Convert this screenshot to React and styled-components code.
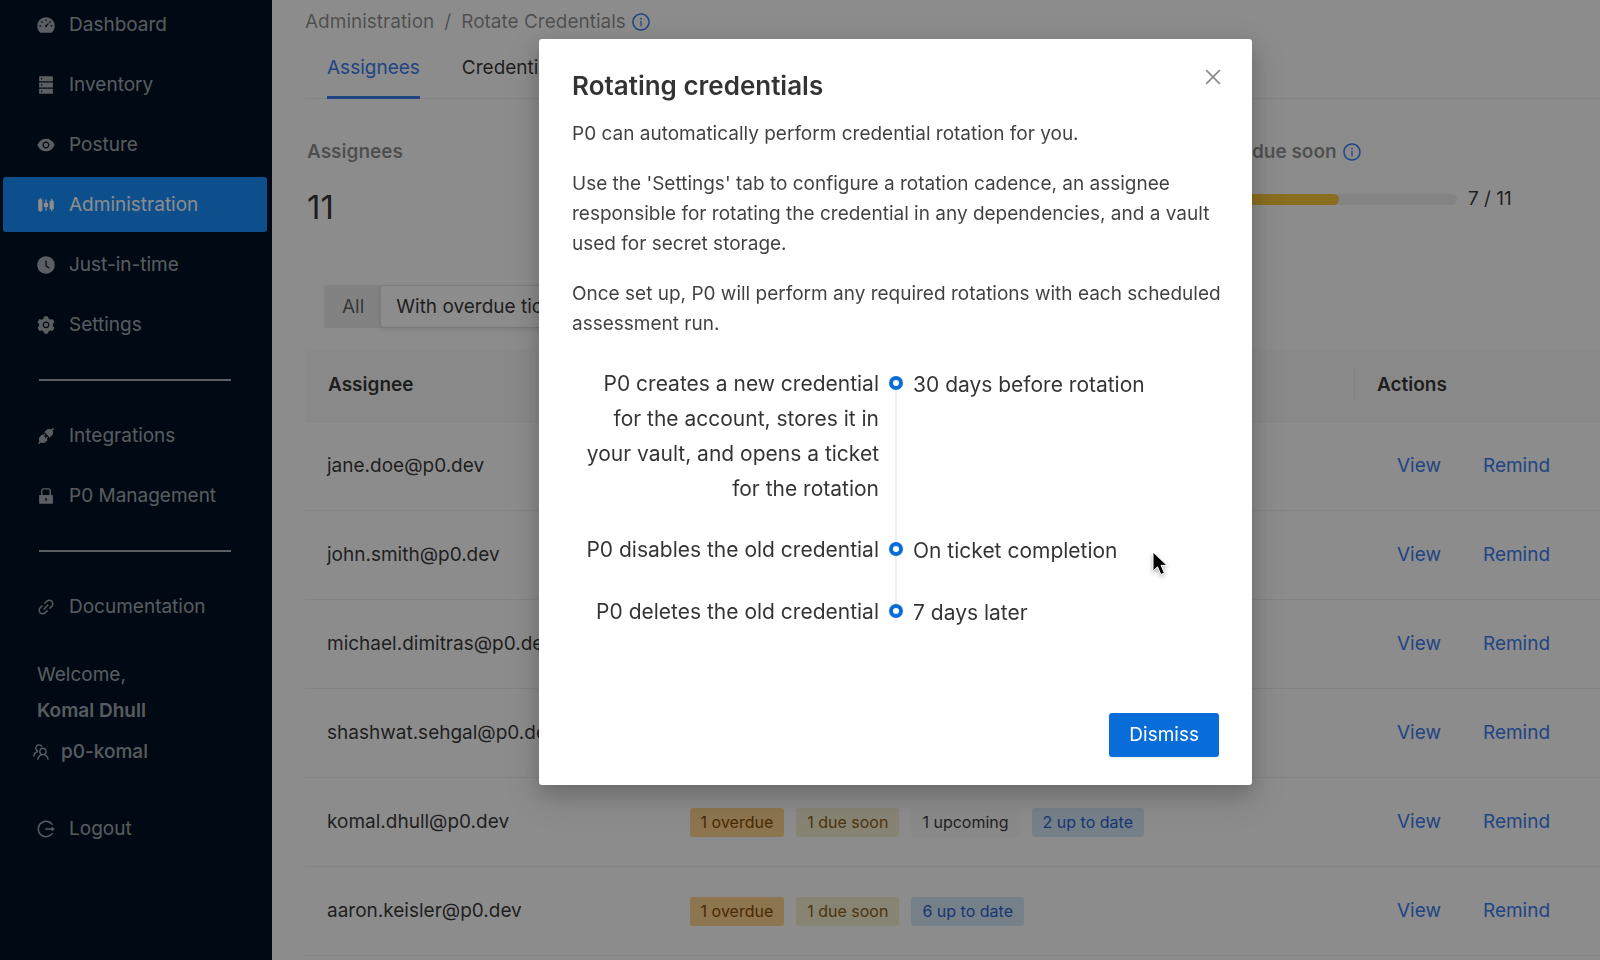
import React, { useState } from 'react';
import styled, { createGlobalStyle } from 'styled-components';
import {
  AiFillApi,
  AiFillClockCircle,
  AiFillDashboard,
  AiFillDatabase,
  AiFillEye,
  AiFillLock,
  AiFillSetting,
  AiFillSliders,
  AiOutlineClose,
  AiOutlineInfoCircle,
  AiOutlineLink,
  AiOutlineLogout,
  AiOutlineTeam,
} from 'react-icons/ai';

const GlobalStyle = createGlobalStyle`
  *,
  *::before,
  *::after {
    box-sizing: border-box;
  }

  body {
    margin: 0;
    overflow: hidden;
    background: #fff;
    color: rgba(0, 0, 0, 0.8);
    font-family: Inter, "Liberation Sans", sans-serif;
    font-size: 19px;
    line-height: 30px;
  }

  button {
    font: inherit;
    cursor: pointer;
  }

  a {
    text-decoration: none;
  }
`;

const Layout = styled.div`
  display: flex;
  height: 100vh;
  overflow: hidden;
`;

const Sidebar = styled.aside`
  flex: 0 0 272px;
  background: #001225;
  color: rgba(255, 255, 255, 0.65);
`;

const Menu = styled.nav`
  display: flex;
  flex-direction: column;
  gap: 5px;
  margin-top: -3px;
  padding: 0 5px 0 3px;
`;

const MenuItem = styled.a`
  display: flex;
  align-items: center;
  gap: 13px;
  height: 55px;
  padding-left: 33px;
  border-radius: 3px;
  background: ${({ $active }) => ($active ? '#1890ff' : 'transparent')};
  color: ${({ $active }) => ($active ? '#fff' : 'rgba(255, 255, 255, 0.65)')};
`;

const MenuDivider = styled.hr`
  width: 192px;
  height: 2px;
  margin: 22px 36px;
  border: 0;
  background: rgba(255, 255, 255, 0.65);
`;

const UserBlock = styled.div`
  display: flex;
  flex-direction: column;
  gap: 6px;
  padding: 21px 0 29px 34px;
`;

const UserName = styled.strong`
  font-weight: 600;
`;

const Tenant = styled.div`
  display: flex;
  align-items: center;
  gap: 10px;
  margin: 5px 0 0 -6px;
  font-weight: 500;
`;

const Main = styled.main`
  flex: 1;
  min-width: 0;
  padding: 7px 0 0 33px;
`;

const Breadcrumb = styled.div`
  display: flex;
  align-items: center;
  gap: 10px;
  color: rgba(0, 0, 0, 0.45);
`;

const CurrentPage = styled.span`
  display: flex;
  align-items: center;
  gap: 5px;
`;

const InfoIcon = styled(AiOutlineInfoCircle)`
  width: 20px;
  height: 20px;
  color: #3b7df0;
`;

const Tabs = styled.div`
  display: flex;
  gap: 42px;
  padding-left: 22px;
  border-bottom: 1px solid #f0f0f0;
`;

const Tab = styled.button`
  margin-bottom: -1px;
  padding: 16px 0 13px;
  border: 0;
  border-bottom: 3px solid ${({ $active }) => ($active ? '#3b7df0' : 'transparent')};
  background: none;
  color: ${({ $active }) => ($active ? '#3b7df0' : 'rgba(0, 0, 0, 0.8)')};
`;

const Stats = styled.section`
  display: grid;
  grid-template-columns: 2fr 1fr;
  padding: 38px 56px 0 2px;
`;

const StatLabel = styled.div`
  display: flex;
  align-items: center;
  gap: 5px;
  margin-bottom: 17px;
  color: rgba(0, 0, 0, 0.45);
  font-weight: 600;
`;

const StatNumber = styled.div`
  font-size: 33px;
  line-height: 46px;
`;

const ProgressRow = styled.div`
  display: flex;
  align-items: center;
  gap: 11px;
  max-width: 380px;
`;

const ProgressTrack = styled.div`
  flex: 1;
  height: 11px;
  overflow: hidden;
  border-radius: 6px;
  background: #f0f0f0;
`;

const ProgressFill = styled.div`
  height: 100%;
  border-radius: 6px;
  background: #fcc93a;
`;

const Segmented = styled.div`
  display: inline-flex;
  margin: 55px 0 21px 19px;
  padding: 1px;
  border-radius: 3px;
  background: #ededed;
`;

const Segment = styled.button`
  height: 41px;
  padding: 0 ${({ $active }) => ($active ? '15px' : '17px')};
  border: 0;
  border-radius: 3px;
  background: ${({ $active }) => ($active ? '#fff' : 'transparent')};
  box-shadow: ${({ $active }) => ($active ? '0 2px 6px rgba(0, 0, 0, 0.12)' : 'none')};
  color: ${({ $active }) => ($active ? 'rgba(0, 0, 0, 0.8)' : 'rgba(0, 0, 0, 0.6)')};
`;

const Table = styled.table`
  width: 100%;
  table-layout: fixed;
  border-collapse: separate;
  border-spacing: 0;
`;

const HeadCell = styled.th`
  width: ${({ $width }) => $width};
  height: 73px;
  padding: 0;
  border-bottom: 1px solid #f0f0f0;
  background: #fafafa;
  font-weight: 600;
  text-align: left;
`;

const HeadLabel = styled.div`
  padding-left: 22px;
  border-left: 1px solid ${({ $divided }) => ($divided ? '#ececec' : 'transparent')};
`;

const Cell = styled.td`
  height: 89px;
  padding: 0 0 0 22px;
  border-bottom: 1px solid #f0f0f0;
`;

const TagList = styled.div`
  display: flex;
  gap: 12px;
`;

const tagColors = {
  overdue: ['#ffd591', '#874d00'],
  soon: ['#f8f0d4', '#8a6116'],
  upcoming: ['#fafafa', 'rgba(0, 0, 0, 0.8)'],
  current: ['#d6e9f8', '#2f62d6'],
};

const Tag = styled.span`
  padding: 0 11px;
  border-radius: 3px;
  background: ${({ $kind }) => tagColors[$kind][0]};
  color: ${({ $kind }) => tagColors[$kind][1]};
  font-size: 16px;
  line-height: 29px;
`;

const LinkButton = styled.button`
  padding: 0 21px;
  border: 0;
  background: none;
  color: #3b7df0;
`;

const Overlay = styled.div`
  position: fixed;
  inset: 0;
  display: flex;
  justify-content: center;
  align-items: flex-start;
  padding: 39px 0 0 191px;
  background: rgba(0, 0, 0, 0.45);
`;

const Modal = styled.section`
  width: 713px;
  padding: 27px 33px 28px;
  border-radius: 3px;
  background: #fff;
  box-shadow: 0 8px 22px rgba(0, 0, 0, 0.2), 0 12px 38px 10px rgba(0, 0, 0, 0.08);
`;

const ModalHeader = styled.header`
  display: flex;
  justify-content: space-between;
  align-items: flex-start;
  margin-bottom: 18px;
`;

const ModalTitle = styled.h2`
  margin: 0;
  padding-top: 4px;
  font-size: 26px;
  font-weight: 600;
  line-height: 31px;
`;

const CloseButton = styled.button`
  display: flex;
  padding: 0;
  margin-right: -5px;
  border: 0;
  background: none;
  color: rgba(0, 0, 0, 0.45);
`;

const Paragraph = styled.p`
  margin: 0 -12px 20px 0;
  color: rgba(0, 0, 0, 0.75);
`;

const Timeline = styled.ol`
  display: grid;
  gap: 26px;
  margin: 27px 0 83px;
  padding: 0;
  list-style: none;
  font-size: 21px;
  line-height: 35px;
`;

const Step = styled.li`
  display: grid;
  grid-template-columns: 307px 14px 1fr;
  column-gap: 10px;
`;

const StepText = styled.div`
  text-align: right;
`;

const StepMarker = styled.div`
  position: relative;
  display: flex;
  justify-content: center;
  align-items: flex-start;

  &::before {
    content: '';
    width: 14px;
    height: 14px;
    margin-top: 10px;
    border: 4px solid #096dd9;
    border-radius: 50%;
  }

  &::after {
    content: '';
    position: absolute;
    top: 24px;
    bottom: -36px;
    width: 2px;
    background: #f0f0f0;
  }

  ${Step}:last-child &::after {
    display: none;
  }
`;

const StepTime = styled.div`
  padding-top: 1px;
`;

const ModalFooter = styled.footer`
  display: flex;
  justify-content: flex-end;
`;

const PrimaryButton = styled.button`
  height: 44px;
  padding: 0 20px;
  border: 0;
  border-radius: 3px;
  background: #096dd9;
  box-shadow: 0 2px 2px rgba(0, 0, 0, 0.05);
  color: #fff;
`;

const Cursor = styled.svg`
  position: fixed;
  top: 550px;
  left: 1150px;
  filter: drop-shadow(0 2px 2px rgba(0, 0, 0, 0.3));
  pointer-events: none;
`;

const mainMenu = [
  { label: 'Dashboard', icon: AiFillDashboard },
  { label: 'Inventory', icon: AiFillDatabase },
  { label: 'Posture', icon: AiFillEye },
  { label: 'Administration', icon: AiFillSliders, active: true },
  { label: 'Just-in-time', icon: AiFillClockCircle },
  { label: 'Settings', icon: AiFillSetting },
];

const manageMenu = [
  { label: 'Integrations', icon: AiFillApi },
  { label: 'P0 Management', icon: AiFillLock },
];

const assignees = [
  { email: 'jane.doe@p0.dev', tags: [] },
  { email: 'john.smith@p0.dev', tags: [] },
  { email: 'michael.dimitras@p0.dev', tags: [] },
  { email: 'shashwat.sehgal@p0.dev', tags: [] },
  {
    email: 'komal.dhull@p0.dev',
    tags: [
      ['overdue', '1 overdue'],
      ['soon', '1 due soon'],
      ['upcoming', '1 upcoming'],
      ['current', '2 up to date'],
    ],
  },
  {
    email: 'aaron.keisler@p0.dev',
    tags: [
      ['overdue', '1 overdue'],
      ['soon', '1 due soon'],
      ['current', '6 up to date'],
    ],
  },
];

const steps = [
  {
    text: 'P0 creates a new credential for the account, stores it in your vault, and opens a ticket for the rotation',
    time: '30 days before rotation',
  },
  { text: 'P0 disables the old credential', time: 'On ticket completion' },
  { text: 'P0 deletes the old credential', time: '7 days later' },
];

const NavLink = ({ label, icon: Icon, active }) => (
  <MenuItem href="#" $active={active}>
    <Icon size={20} />
    {label}
  </MenuItem>
);

const Progress = ({ count, total }) => (
  <ProgressRow>
    <ProgressTrack>
      <ProgressFill style={{ width: `${(count / total) * 100}%` }} />
    </ProgressTrack>
    <span>{count} / {total}</span>
  </ProgressRow>
);

const RotationModal = ({ onClose }) => (
  <Overlay>
    <Modal role="dialog" aria-labelledby="rotation-title">
      <ModalHeader>
        <ModalTitle id="rotation-title">Rotating credentials</ModalTitle>
        <CloseButton aria-label="Close" onClick={onClose}>
          <AiOutlineClose size={22} />
        </CloseButton>
      </ModalHeader>
      <Paragraph>P0 can automatically perform credential rotation for you.</Paragraph>
      <Paragraph>
        Use the 'Settings' tab to configure a rotation cadence, an assignee
        responsible for rotating the credential in any dependencies, and a vault
        used for secret storage.
      </Paragraph>
      <Paragraph>
        Once set up, P0 will perform any required rotations with each scheduled
        assessment run.
      </Paragraph>
      <Timeline>
        {steps.map((step) => (
          <Step key={step.time}>
            <StepText>{step.text}</StepText>
            <StepMarker />
            <StepTime>{step.time}</StepTime>
          </Step>
        ))}
      </Timeline>
      <ModalFooter>
        <PrimaryButton onClick={onClose}>Dismiss</PrimaryButton>
      </ModalFooter>
    </Modal>
  </Overlay>
);

const App = () => {
  const [modalOpen, setModalOpen] = useState(true);

  return (
    <>
      <GlobalStyle />
      <Layout>
        <Sidebar>
          <Menu>
            {mainMenu.map((item) => (
              <NavLink key={item.label} {...item} />
            ))}
            <MenuDivider />
            {manageMenu.map((item) => (
              <NavLink key={item.label} {...item} />
            ))}
            <MenuDivider />
            <NavLink label="Documentation" icon={AiOutlineLink} />
            <UserBlock>
              <span>Welcome,</span>
              <UserName>Komal Dhull</UserName>
              <Tenant>
                <AiOutlineTeam size={20} />
                p0-komal
              </Tenant>
            </UserBlock>
            <NavLink label="Logout" icon={AiOutlineLogout} />
          </Menu>
        </Sidebar>
        <Main>
          <Breadcrumb>
            <span>Administration</span>
            <span>/</span>
            <CurrentPage>
              Rotate Credentials
              <InfoIcon />
            </CurrentPage>
          </Breadcrumb>
          <Tabs role="tablist">
            <Tab role="tab" aria-selected="true" $active>Assignees</Tab>
            <Tab role="tab" aria-selected="false">Credentials</Tab>
          </Tabs>
          <Stats>
            <div>
              <StatLabel>Assignees</StatLabel>
              <StatNumber>11</StatNumber>
            </div>
            <div>
              <StatLabel>
                Open tickets due soon
                <InfoIcon />
              </StatLabel>
              <Progress count={7} total={11} />
            </div>
          </Stats>
          <Segmented>
            <Segment>All</Segment>
            <Segment $active>With overdue tickets</Segment>
          </Segmented>
          <Table>
            <thead>
              <tr>
                <HeadCell $width="28%"><HeadLabel>Assignee</HeadLabel></HeadCell>
                <HeadCell $width="53%" />
                <HeadCell $width="19%"><HeadLabel $divided>Actions</HeadLabel></HeadCell>
              </tr>
            </thead>
            <tbody>
              {assignees.map(({ email, tags }) => (
                <tr key={email}>
                  <Cell>{email}</Cell>
                  <Cell>
                    <TagList>
                      {tags.map(([kind, label]) => (
                        <Tag key={label} $kind={kind}>{label}</Tag>
                      ))}
                    </TagList>
                  </Cell>
                  <Cell>
                    <LinkButton>View</LinkButton>
                    <LinkButton>Remind</LinkButton>
                  </Cell>
                </tr>
              ))}
            </tbody>
          </Table>
        </Main>
      </Layout>
      {modalOpen && <RotationModal onClose={() => setModalOpen(false)} />}
      <Cursor width="20" height="28" viewBox="0 0 20 28">
        <path
          d="M3 2v19l4.500-4.200 3.300 7.700 3.600-1.500-3.300-7.600H17z"
          fill="#000"
          stroke="#fff"
          strokeWidth="1"
        />
      </Cursor>
    </>
  );
};

export default App;
